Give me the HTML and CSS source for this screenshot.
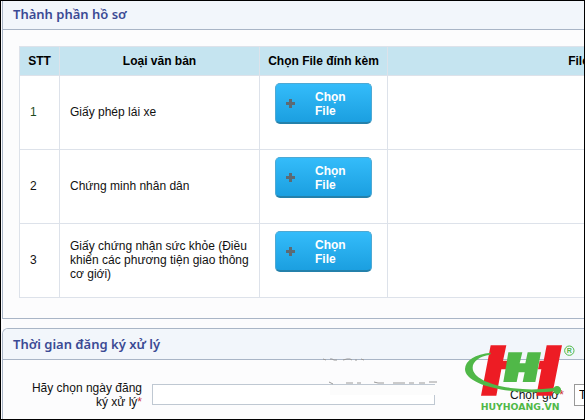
FILE: index.html
```html
<!DOCTYPE html>
<html lang="vi">
<head>
    <meta charset="UTF-8">
    <meta name="viewport" content="width=device-width, initial-scale=1.0">
    <title>Thành phần hồ sơ</title>
    <link rel="stylesheet" href="styles.css">
</head>
<body>
    <div class="page">
        <section class="panel panel-files">
            <h2>Thành phần hồ sơ</h2>
            <div class="panel-body">
                <table class="files">
                    <colgroup>
                        <col class="col-stt">
                        <col class="col-name">
                        <col class="col-pick">
                        <col class="col-file">
                    </colgroup>
                    <thead>
                        <tr>
                            <th>STT</th>
                            <th>Loại văn bản</th>
                            <th>Chọn File đính kèm</th>
                            <th>File đính kèm</th>
                        </tr>
                    </thead>
                    <tbody>
                        <tr>
                            <td class="first">1</td>
                            <td>Giấy phép lái xe</td>
                            <td class="pick"><button type="button" class="upload"><svg class="plus" viewBox="0 0 9 9"><path d="M3 0h3v3h3v3H6v3H3V6H0V3h3z"/></svg><span>Chọn File</span></button></td>
                            <td></td>
                        </tr>
                        <tr>
                            <td>2</td>
                            <td>Chứng minh nhân dân</td>
                            <td class="pick"><button type="button" class="upload"><svg class="plus" viewBox="0 0 9 9"><path d="M3 0h3v3h3v3H6v3H3V6H0V3h3z"/></svg><span>Chọn File</span></button></td>
                            <td></td>
                        </tr>
                        <tr>
                            <td>3</td>
                            <td>Giấy chứng nhận sức khỏe (Điều khiển các phương tiện giao thông cơ giới)</td>
                            <td class="pick"><button type="button" class="upload"><svg class="plus" viewBox="0 0 9 9"><path d="M3 0h3v3h3v3H6v3H3V6H0V3h3z"/></svg><span>Chọn File</span></button></td>
                            <td></td>
                        </tr>
                    </tbody>
                </table>
            </div>
        </section>

        <section class="panel panel-time">
            <h2>Thời gian đăng ký xử lý</h2>
            <form class="time-form">
                <label class="date-label" for="ngay">Hãy chọn ngày đăng ký xử lý<span class="required">*</span></label>
                <input type="text" id="ngay" class="date">
                <label class="hour-label" for="gio">Chọn giờ<span class="required">*</span></label>
                <select id="gio" class="hour">
                    <option>Tất cả</option>
                </select>
            </form>
        </section>

        <!-- faded watermark -->
        <svg class="faded" viewBox="0 0 118 40" aria-hidden="true">
            <path fill="#fcfcfc" d="M9 28H116V38H9z"/>
            <path fill="none" stroke="#9a9a9a" d="M2 2l3 1M9 2h2l2 1h3M22 3l4-1h3l2 1M34 3h2M40 2l3 1M8 25l4 2M25 26h7M36 26h4M53 25l4 1 6 0M72 26h12M88 26h5M98 26h6M108 25h8"/>
        </svg>

        <svg class="logo" viewBox="225 159 336 204" role="img" aria-label="HUYHOANG.VN">
            <g fill="#ed1c24">
                <path d="M305 166H352L342 212H360L354 238H337L322 317H276Z"/>
                <path d="M473 166H519L489 317H442L457 238H447L452 212H464Z"/>
            </g>
            <path fill="#50b848" d="M358 187H400L392 220H409L416 187H456L439 276H401L407 247H389L383 276H343Z"/>
            <path fill="#50b848" d="M306 188C258 192 229 211 228 237C228 270 292 295 370 303C420 308 463 308 493 304A12 12 0 1 0 494 294C455 299 414 300 373 295C304 286 251 263 251 233C251 213 272 199 303 194Z"/>
            <text class="logo-name" x="275" y="360">HUYHOANG.VN</text>
            <circle cx="541" cy="182" r="14" fill="none" stroke="#50b848" stroke-width="3"/>
            <text class="logo-mark" x="541" y="190">R</text>
        </svg>
    </div>
</body>
</html>
```
FILE: styles.css
```css
* {
    box-sizing: border-box;
}
body {
    margin: 0;
    font-family: "Liberation Sans", Arial, sans-serif;
    font-size: 12px;
    line-height: 14px;
    color: #111;
}
.page {
    position: relative;
    height: 100vh;
    overflow: hidden;
    border: 1px solid #000;
    background: #fbfbfd;
}
.panel {
    margin: 0 0 9px 1px;
    border: 1px solid #a9b5c6;
    border-right: none;
    background: #fcfcfd;
}
.panel h2 {
    margin: 0;
    padding: 0 10px;
    height: 31px;
    line-height: 30px;
    border-bottom: 1px solid #a9b5c6;
    background: #f2f6fb;
    color: #3b4a94;
    font-family: "Noto Sans", sans-serif;
    font-size: 13px;
    font-weight: 600;
}
.panel-files {
    border-top: none;
}
.panel-files h2 {
    height: 29px;
    line-height: 27px;
}
.panel-time {
    border-bottom: none;
    border-top-left-radius: 6px;
}
.panel-time h2 {
    border-top-left-radius: 5px;
}
.panel-body {
    padding: 16px 0 20px 16px;
    overflow: hidden;
}
.files {
    width: 806px;
    table-layout: fixed;
    border-collapse: collapse;
    background: #fff;
}
.col-stt {
    width: 40px;
}
.col-name {
    width: 200px;
}
.col-pick {
    width: 128px;
}
.col-file {
    width: 438px;
}
.files th,
.files td {
    border: 1px solid #dde2ea;
}
.files th {
    height: 29px;
    padding: 0;
    background: #c5e4f0;
    color: #000;
}
.files td {
    height: 74px;
    padding: 0 10px 2px;
}
.files .first {
    color: #1d4a1d;
}
.files .pick {
    padding: 7px 15px;
    vertical-align: top;
}
.upload {
    display: flex;
    align-items: center;
    gap: 20px;
    width: 97px;
    height: 41px;
    padding: 1px 24px 0 10px;
    border: 1px solid #4da9d4;
    border-bottom: 2px solid #2481ab;
    border-radius: 5px;
    background: linear-gradient(#34bcfa, #1b9fe0);
    color: #fff;
    font-family: inherit;
    font-size: 12px;
    font-weight: bold;
    line-height: 14px;
    text-align: left;
}
.plus {
    flex: none;
    width: 9px;
    height: 9px;
    fill: #5d6a73;
}
.time-form {
    display: flex;
    align-items: flex-start;
    padding: 21px 0 14px 24px;
    overflow: hidden;
}
.date-label {
    flex: none;
    width: 115px;
    text-align: right;
}
.date {
    flex: none;
    width: 283px;
    height: 21px;
    margin: 3px 0 0 10px;
    border: 1px solid #bfc8d2;
    background: #fff;
}
.hour-label {
    flex: none;
    margin: 7px 10px 0 75px;
}
.required {
    color: #c33;
}
.hour {
    flex: none;
    width: 100px;
    height: 22px;
    margin-top: 3px;
    border: 1px solid #999;
    background: #fff;
    font-family: inherit;
    font-size: 12px;
}
.faded {
    position: absolute;
    left: 320px;
    top: 356px;
    width: 118px;
    height: 40px;
}
.logo {
    position: absolute;
    right: 8px;
    bottom: 8px;
    width: 112px;
    height: 68px;
}
.logo-name {
    fill: #50b848;
    font-family: "DejaVu Sans", sans-serif;
    font-size: 28px;
    font-weight: bold;
}
.logo-mark {
    fill: #50b848;
    font-family: "Liberation Sans", Arial, sans-serif;
    font-size: 21px;
    font-weight: bold;
    text-anchor: middle;
}
```
